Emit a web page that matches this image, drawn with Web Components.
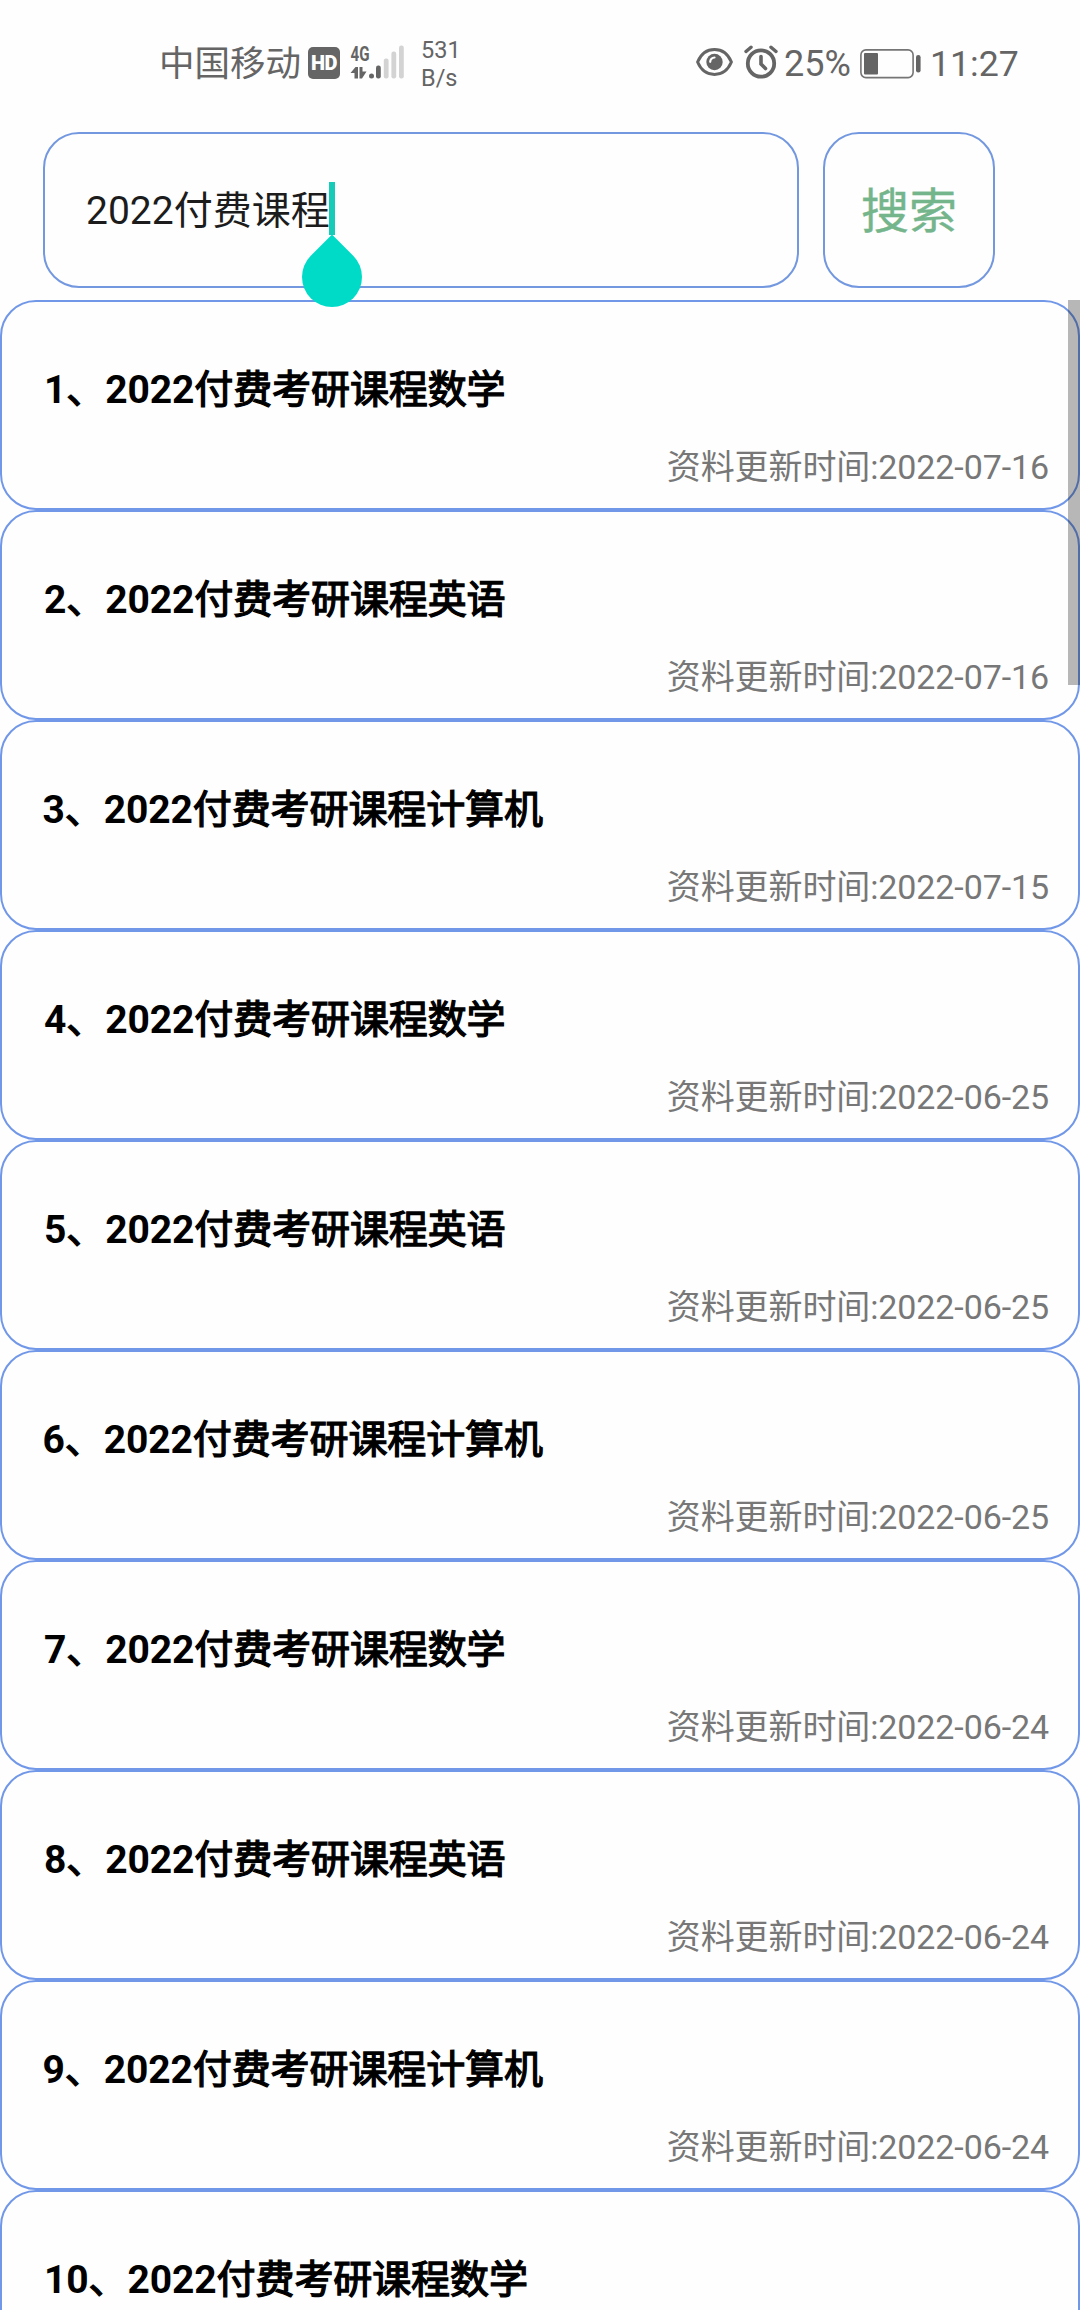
<!DOCTYPE html>
<html lang="zh-CN">
<head>
<meta charset="utf-8">
<title>搜索</title>
<style>
  body {
    margin: 0;
    height: 2310px;
    overflow: hidden;
    background: #fefefe;
    font-family: Roboto, "Noto Sans CJK SC", sans-serif;
  }
</style>
</head>
<body>
<search-page></search-page>

<script>
const define = (name, html, setup) => {
  const template = document.createElement("template");
  template.innerHTML = html;
  customElements.define(name, class extends HTMLElement {
    constructor() {
      super();
      this.attachShadow({ mode: "open" }).appendChild(template.content.cloneNode(true));
    }
    connectedCallback() {
      if (setup) setup(this, this.shadowRoot);
    }
  });
};

define("signal-icon", `
  <style>
    :host { display: block; width: 56px; height: 38px; }
    svg { display: block; }
    text { font: 700 20px Roboto, sans-serif; }
  </style>
  <svg width="56" height="38" viewBox="0 0 56 38" fill="#656565">
    <text x="0.5" y="15.5" textLength="19" lengthAdjust="spacingAndGlyphs">4G</text>
    <path d="M0.500 28 5.500 22H8V33.500H4.500V28ZM9.500 22H12.500V26.500H16.500L12 33.500H9.500Z"/>
    <circle cx="21.500" cy="31" r="2.500"/>
    <rect x="26" y="20.500" width="4.800" height="13" rx="2.200"/>
    <g fill="#d3d3d3">
      <rect x="33.800" y="13.500" width="4.800" height="20" rx="2.200"/>
      <rect x="41.400" y="6.500" width="4.800" height="27" rx="2.200"/>
      <rect x="49" y="0.500" width="4.800" height="33" rx="2.200"/>
    </g>
  </svg>`);

define("eye-icon", `
  <style>
    :host { display: block; width: 37px; height: 28px; }
    svg { display: block; }
  </style>
  <svg width="37" height="28" viewBox="0 0 37 28" fill="none">
    <path d="M1.600 14C5 6 11 1.600 18.500 1.600S32 6 35.400 14C32 22 26 26.400 18.500 26.400S5 22 1.600 14Z" stroke="#656565" stroke-width="3"/>
    <circle cx="18.500" cy="14" r="8.200" fill="#656565"/>
    <path d="M14.200 13.800A4.300 4.300 0 0 1 18.500 9.500" stroke="#fefefe" stroke-width="2.200" stroke-linecap="round"/>
  </svg>`);

define("alarm-icon", `
  <style>
    :host { display: block; width: 34px; height: 34px; }
    svg { display: block; }
  </style>
  <svg width="34" height="34" viewBox="0 0 34 34" fill="none" stroke="#656565" stroke-linecap="round">
    <circle cx="17" cy="18.500" r="13.200" stroke-width="3.800"/>
    <path d="M17 11.500V19L21.500 23.500" stroke-width="3.600"/>
    <path d="M2 6.500 7 2.200M32 6.500 27 2.200" stroke-width="3.400"/>
  </svg>`);

define("battery-icon", `
  <style>
    :host { display: block; width: 61px; height: 30px; }
    svg { display: block; }
  </style>
  <svg width="61" height="30" viewBox="0 0 61 30" fill="#656565">
    <rect x="0.900" y="0.900" width="52.200" height="27.700" rx="5" fill="none" stroke="#757575" stroke-width="1.600"/>
    <rect x="4" y="4" width="14" height="21.500" rx="1"/>
    <rect x="56" y="6" width="4.600" height="17.500" rx="2.200"/>
  </svg>`);

define("status-bar", `
  <style>
    :host {
      display: flex;
      align-items: center;
      box-sizing: border-box;
      height: 127px;
      padding: 0 60px 0 159px;
      color: #656565;
      font-size: 36px;
      line-height: 42px;
      white-space: nowrap;
    }
    .carrier { width: 149px; padding-top: 1px; font-size: 35.500px; }
    .hd {
      width: 32px;
      height: 32px;
      margin: 0 10px 2px 0;
      border-radius: 5px;
      background: #656565;
      color: #fefefe;
      font: 900 20px/33px Roboto, sans-serif;
      letter-spacing: -0.500px;
      text-align: center;
    }
    .speed { margin-left: 15px; font-size: 23.500px; line-height: 28px; }
    eye-icon { margin: 0 11px 3px auto; }
    alarm-icon { margin: 0 6px 4px 0; }
    .percent { width: 76px; }
    .time { width: 90px; margin-left: 9px; font-size: 35.700px; }
  </style>
  <span class="carrier">中国移动</span>
  <span class="hd">HD</span>
  <signal-icon></signal-icon>
  <span class="speed">531<br>B/s</span>
  <eye-icon></eye-icon>
  <alarm-icon></alarm-icon>
  <span class="percent">25%</span>
  <battery-icon></battery-icon>
  <span class="time">11:27</span>`);

define("search-field", `
  <style>
    :host {
      display: flex;
      align-items: center;
      box-sizing: border-box;
      width: 756px;
      height: 156px;
      padding-left: 41px;
      border: 2px solid #7398e0;
      border-radius: 36px;
      color: #1c1c1c;
      font-size: 39px;
      line-height: 46px;
    }
    .value { position: relative; padding-top: 1px; }
    .caret {
      position: absolute;
      left: calc(100% - 1px);
      top: -5px;
      width: 6px;
      height: 53px;
      background: #17cbb9;
    }
    /* drop-shaped drag handle hanging under the caret */
    .handle {
      position: absolute;
      z-index: 1;
      left: calc(100% - 28px);
      top: 60px;
      width: 60px;
      height: 60px;
      border-radius: 0 50% 50% 50%;
      background: #00dbc8;
      transform: rotate(45deg);
    }
  </style>
  <span class="value"><slot></slot><i class="caret"></i><i class="handle"></i></span>`);

define("search-button", `
  <style>
    :host {
      display: flex;
      align-items: center;
      justify-content: center;
      box-sizing: border-box;
      width: 172px;
      height: 156px;
      padding-top: 4px;
      border: 2px solid #7398e0;
      border-radius: 36px;
      color: #75b58c;
      font-size: 48px;
      line-height: 56px;
      -webkit-text-stroke: 0.400px #75b58c;
    }
  </style>
  <slot></slot>`);

define("course-item", `
  <style>
    :host {
      display: flex;
      flex-direction: column;
      box-sizing: border-box;
      height: 210px;
      padding: 65px 29px 0 42px;
      border: 2px solid #7197e8;
      border-radius: 36px;
      white-space: nowrap;
    }
    /* regular CJK glyphs thickened with a stroke, digits in real bold */
    .title {
      color: #000;
      font-size: 39px;
      line-height: 46px;
      letter-spacing: -0.100px;
      -webkit-text-stroke: 1.300px #000;
    }
    .number, .year { font-weight: 700; -webkit-text-stroke: 0; }
    :host([wide]) .title { margin-left: -1.500px; }
    .date {
      margin-top: 34px;
      align-self: flex-end;
      color: #777;
      font-size: 34px;
      line-height: 40px;
      letter-spacing: -0.100px;
    }
  </style>
  <div class="title"><span class="number"></span>、<span class="year"></span><slot></slot></div>
  <div class="date">资料更新时间:<span class="day"></span></div>`,
  (host, root) => {
    root.querySelector(".number").textContent = host.getAttribute("number");
    root.querySelector(".year").textContent = host.getAttribute("year");
    root.querySelector(".day").textContent = host.getAttribute("date");
  });

define("course-list", `
  <style>
    :host { display: block; position: relative; }
    .scrollbar {
      position: absolute;
      right: 0;
      top: 0;
      width: 12px;
      height: 385px;
      background: rgba(0, 0, 0, 0.28);
    }
  </style>
  <slot></slot>
  <div class="scrollbar"></div>`);

const courses = [
  ["数学", "2022-07-16"],
  ["英语", "2022-07-16"],
  ["计算机", "2022-07-15"],
  ["数学", "2022-06-25"],
  ["英语", "2022-06-25"],
  ["计算机", "2022-06-25"],
  ["数学", "2022-06-24"],
  ["英语", "2022-06-24"],
  ["计算机", "2022-06-24"],
  ["数学", "2022-06-24"],
];

define("search-page", `
  <style>
    :host { display: block; width: 1080px; height: 2310px; overflow: hidden; }
    .search { display: flex; gap: 24px; padding: 5px 0 12px 43px; }
  </style>
  <status-bar></status-bar>
  <div class="search">
    <search-field>2022付费课程</search-field>
    <search-button>搜索</search-button>
  </div>
  <course-list></course-list>`,
  (host, root) => {
    const list = root.querySelector("course-list");
    courses.forEach(([subject, date], i) => {
      const item = document.createElement("course-item");
      item.setAttribute("number", i + 1);
      item.setAttribute("year", "2022");
      item.setAttribute("date", date);
      item.toggleAttribute("wide", subject.length > 2);
      item.textContent = "付费考研课程" + subject;
      list.appendChild(item);
    });
  });
</script>
</body>
</html>
